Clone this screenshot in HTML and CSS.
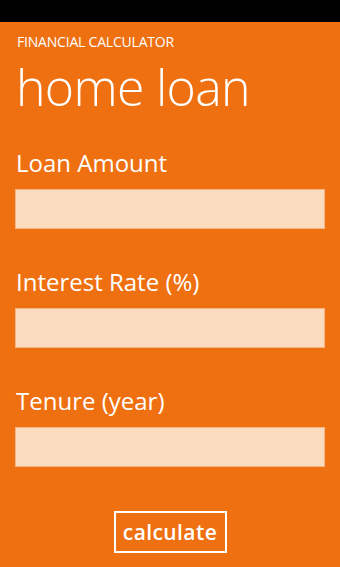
FILE: index.html
```html
<!DOCTYPE html>
<html>
<head>
<meta charset="utf-8">
<link rel="stylesheet" href="styles.css">
</head>
<body>
<div class="statusbar"></div>
<main class="page">
  <div class="app-title">FINANCIAL CALCULATOR</div>
  <h1 class="page-title">home loan</h1>
  <div class="field">
    <label class="field-label">Loan Amount</label>
    <div class="field-input"></div>
  </div>
  <div class="field">
    <label class="field-label">Interest Rate (%)</label>
    <div class="field-input"></div>
  </div>
  <div class="field">
    <label class="field-label">Tenure (year)</label>
    <div class="field-input"></div>
  </div>
  <div class="actions">
    <button class="btn">calculate</button>
  </div>
</main>
</body>
</html>
```
FILE: styles.css
```css
html, body {
  margin: 0;
  padding: 0;
  background: #ef7010;
}
body {
  width: 340px;
  height: 567px;
  overflow: hidden;
  font-family: "Open Sans", "Noto Sans", sans-serif;
  color: #ffffff;
}
.statusbar {
  height: 22px;
  background: #000000;
}
.page {
  padding: 11px 15px 0 15px;
  display: flex;
  flex-direction: column;
}
.app-title {
  font-size: 14px;
  line-height: 18px;
  padding-left: 2px;
  font-weight: 400;
  letter-spacing: -0.2px;
}
.page-title {
  margin: 11px 0 0 0;
  font-size: 50px;
  line-height: 50px;
  font-weight: 300;
  padding-left: 1px;
  letter-spacing: -0.7px;
}
.field {
  display: flex;
  flex-direction: column;
  gap: 10px;
  margin-top: 35px;
}
.field + .field {
  margin-top: 37px;
}
.field-label {
  font-size: 24px;
  line-height: 32px;
  padding-left: 1px;
}
.field-input {
  height: 38px;
  width: 308px;
  background: #fbdbc0;
  border: 1px solid #f8b584;
}
.actions {
  display: flex;
  justify-content: center;
  margin-top: 44px;
}
.btn {
  width: 113px;
  height: 42px;
  border: 2px solid #ffffff;
  background: transparent;
  color: #ffffff;
  font-family: "Open Sans", "Noto Sans", sans-serif;
  font-size: 21px;
  font-weight: 600;
  letter-spacing: 0.4px;
  padding: 0;
  line-height: 36px;
}
```
